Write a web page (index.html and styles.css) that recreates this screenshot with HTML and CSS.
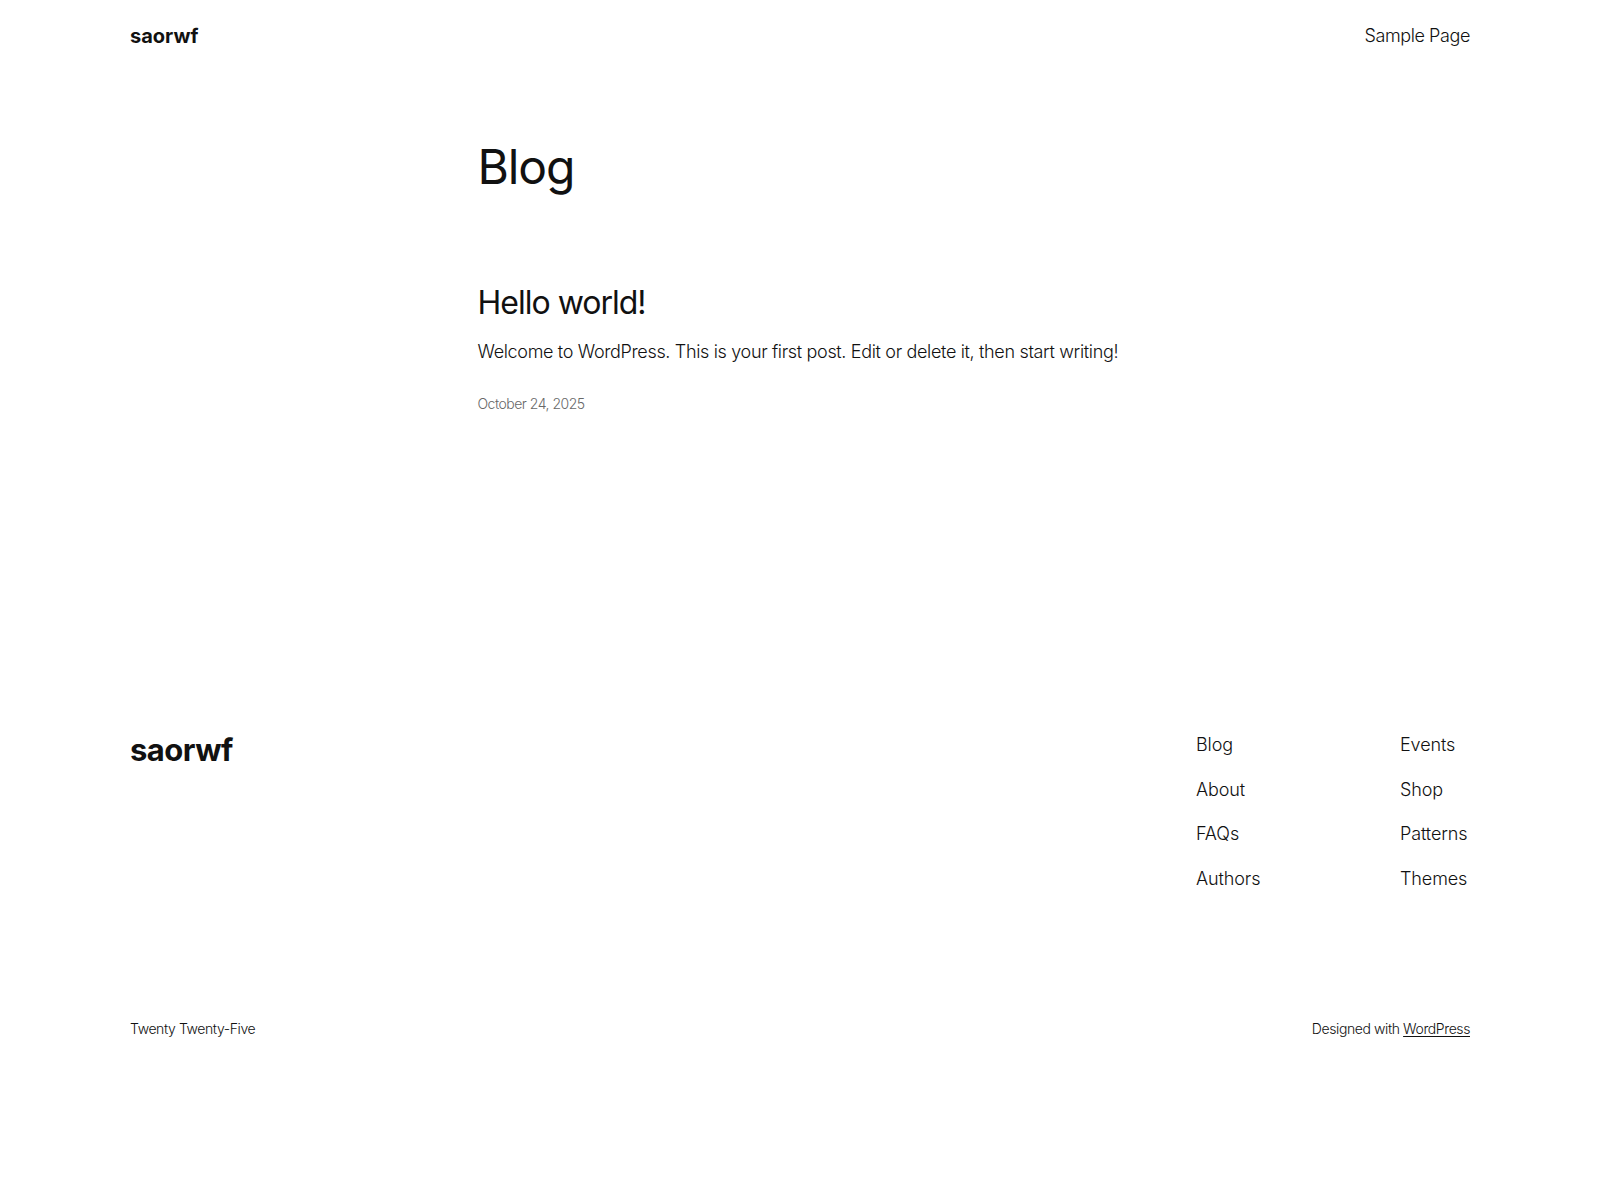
FILE: index.html
```html
<!DOCTYPE html>
<html lang="en">
<head>
<meta charset="utf-8">
<title>Blog – saorwf</title>
<link rel="stylesheet" href="styles.css">
</head>
<body>
<header class="site-header">
  <a class="site-title" href="#">saorwf</a>
  <nav class="header-nav"><a href="#">Sample Page</a></nav>
</header>

<main class="site-main">
  <h1 class="page-title">Blog</h1>
  <article class="post">
    <h2 class="post-title"><a href="#">Hello world!</a></h2>
    <p class="post-excerpt">Welcome to WordPress. This is your first post. Edit or delete it, then start writing!</p>
    <div class="post-date">October 24, 2025</div>
  </article>
</main>

<footer class="site-footer">
  <div class="footer-top">
    <h2 class="footer-title"><a href="#">saorwf</a></h2>
    <div class="footer-nav">
      <ul class="footer-col">
        <li><a href="#">Blog</a></li>
        <li><a href="#">About</a></li>
        <li><a href="#">FAQs</a></li>
        <li><a href="#">Authors</a></li>
      </ul>
      <ul class="footer-col">
        <li><a href="#">Events</a></li>
        <li><a href="#">Shop</a></li>
        <li><a href="#">Patterns</a></li>
        <li><a href="#">Themes</a></li>
      </ul>
    </div>
  </div>
  <div class="footer-bottom">
    <p class="credit">Twenty Twenty-Five</p>
    <p class="credit">Designed with <a class="credit-link" href="#">WordPress</a></p>
  </div>
</footer>
</body>
</html>
```

FILE: styles.css
```css
html, body {
  margin: 0;
  padding: 0;
  background: #ffffff;
}

body {
  font-family: "Inter", "Liberation Sans", sans-serif;
  font-weight: 300;
  font-size: 18px;
  line-height: 1.4;
  letter-spacing: -0.1px;
  color: #111111;
}

a {
  color: inherit;
  text-decoration: none;
}

/* Header */
.site-header {
  width: 1340px;
  margin: 0 auto;
  padding: 22px 0 20px;
  display: flex;
  justify-content: space-between;
  align-items: center;
  line-height: 28px;
}

.site-title {
  font-size: 20px;
  font-weight: 700;
  letter-spacing: 0;
}

.header-nav a {
  font-size: 18px;
  font-weight: 300;
  letter-spacing: -0.4px;
}

/* Main */
.site-main {
  width: 645px;
  margin: 0 auto;
  padding-top: 70px;
}

.page-title {
  margin: 0;
  font-size: 48px;
  font-weight: 400;
  line-height: 54px;
  letter-spacing: -1.1px;
}

.post {
  margin-top: 91px;
}

.post-title {
  margin: 0;
  font-size: 32px;
  font-weight: 400;
  line-height: 36px;
  letter-spacing: -1px;
}

.post-excerpt {
  margin: 18px 0 0;
  font-size: 18px;
  line-height: 25.2px;
  letter-spacing: -0.34px;
  white-space: nowrap;
}

.post-date {
  margin-top: 30px;
  font-size: 14px;
  line-height: 19.6px;
  letter-spacing: -0.5px;
  color: #686868;
}

/* Footer */
.site-footer {
  width: 1340px;
  margin: 0 auto;
  padding-top: 318px;
  padding-bottom: 150px;
}

.footer-top {
  display: flex;
  justify-content: space-between;
  align-items: flex-start;
}

.footer-title {
  margin: 0;
  font-size: 31px;
  font-weight: 700;
  line-height: 36px;
  letter-spacing: -0.5px;
}

.footer-nav {
  display: grid;
  grid-template-columns: 204px 70px;
}

.footer-col {
  list-style: none;
  margin: 0;
  padding: 0;
  display: flex;
  flex-direction: column;
  gap: 19.6px;
}

.footer-col li {
  font-size: 18px;
  line-height: 25.2px;
  white-space: nowrap;
}

.footer-bottom {
  margin-top: 128px;
  display: flex;
  justify-content: space-between;
  align-items: baseline;
}

.credit {
  margin: 0;
  font-size: 14px;
  line-height: 19.6px;
  letter-spacing: -0.4px;
}

.credit-link {
  text-decoration: underline;
  text-underline-offset: 2px;
  text-decoration-thickness: 1px;
}
```
